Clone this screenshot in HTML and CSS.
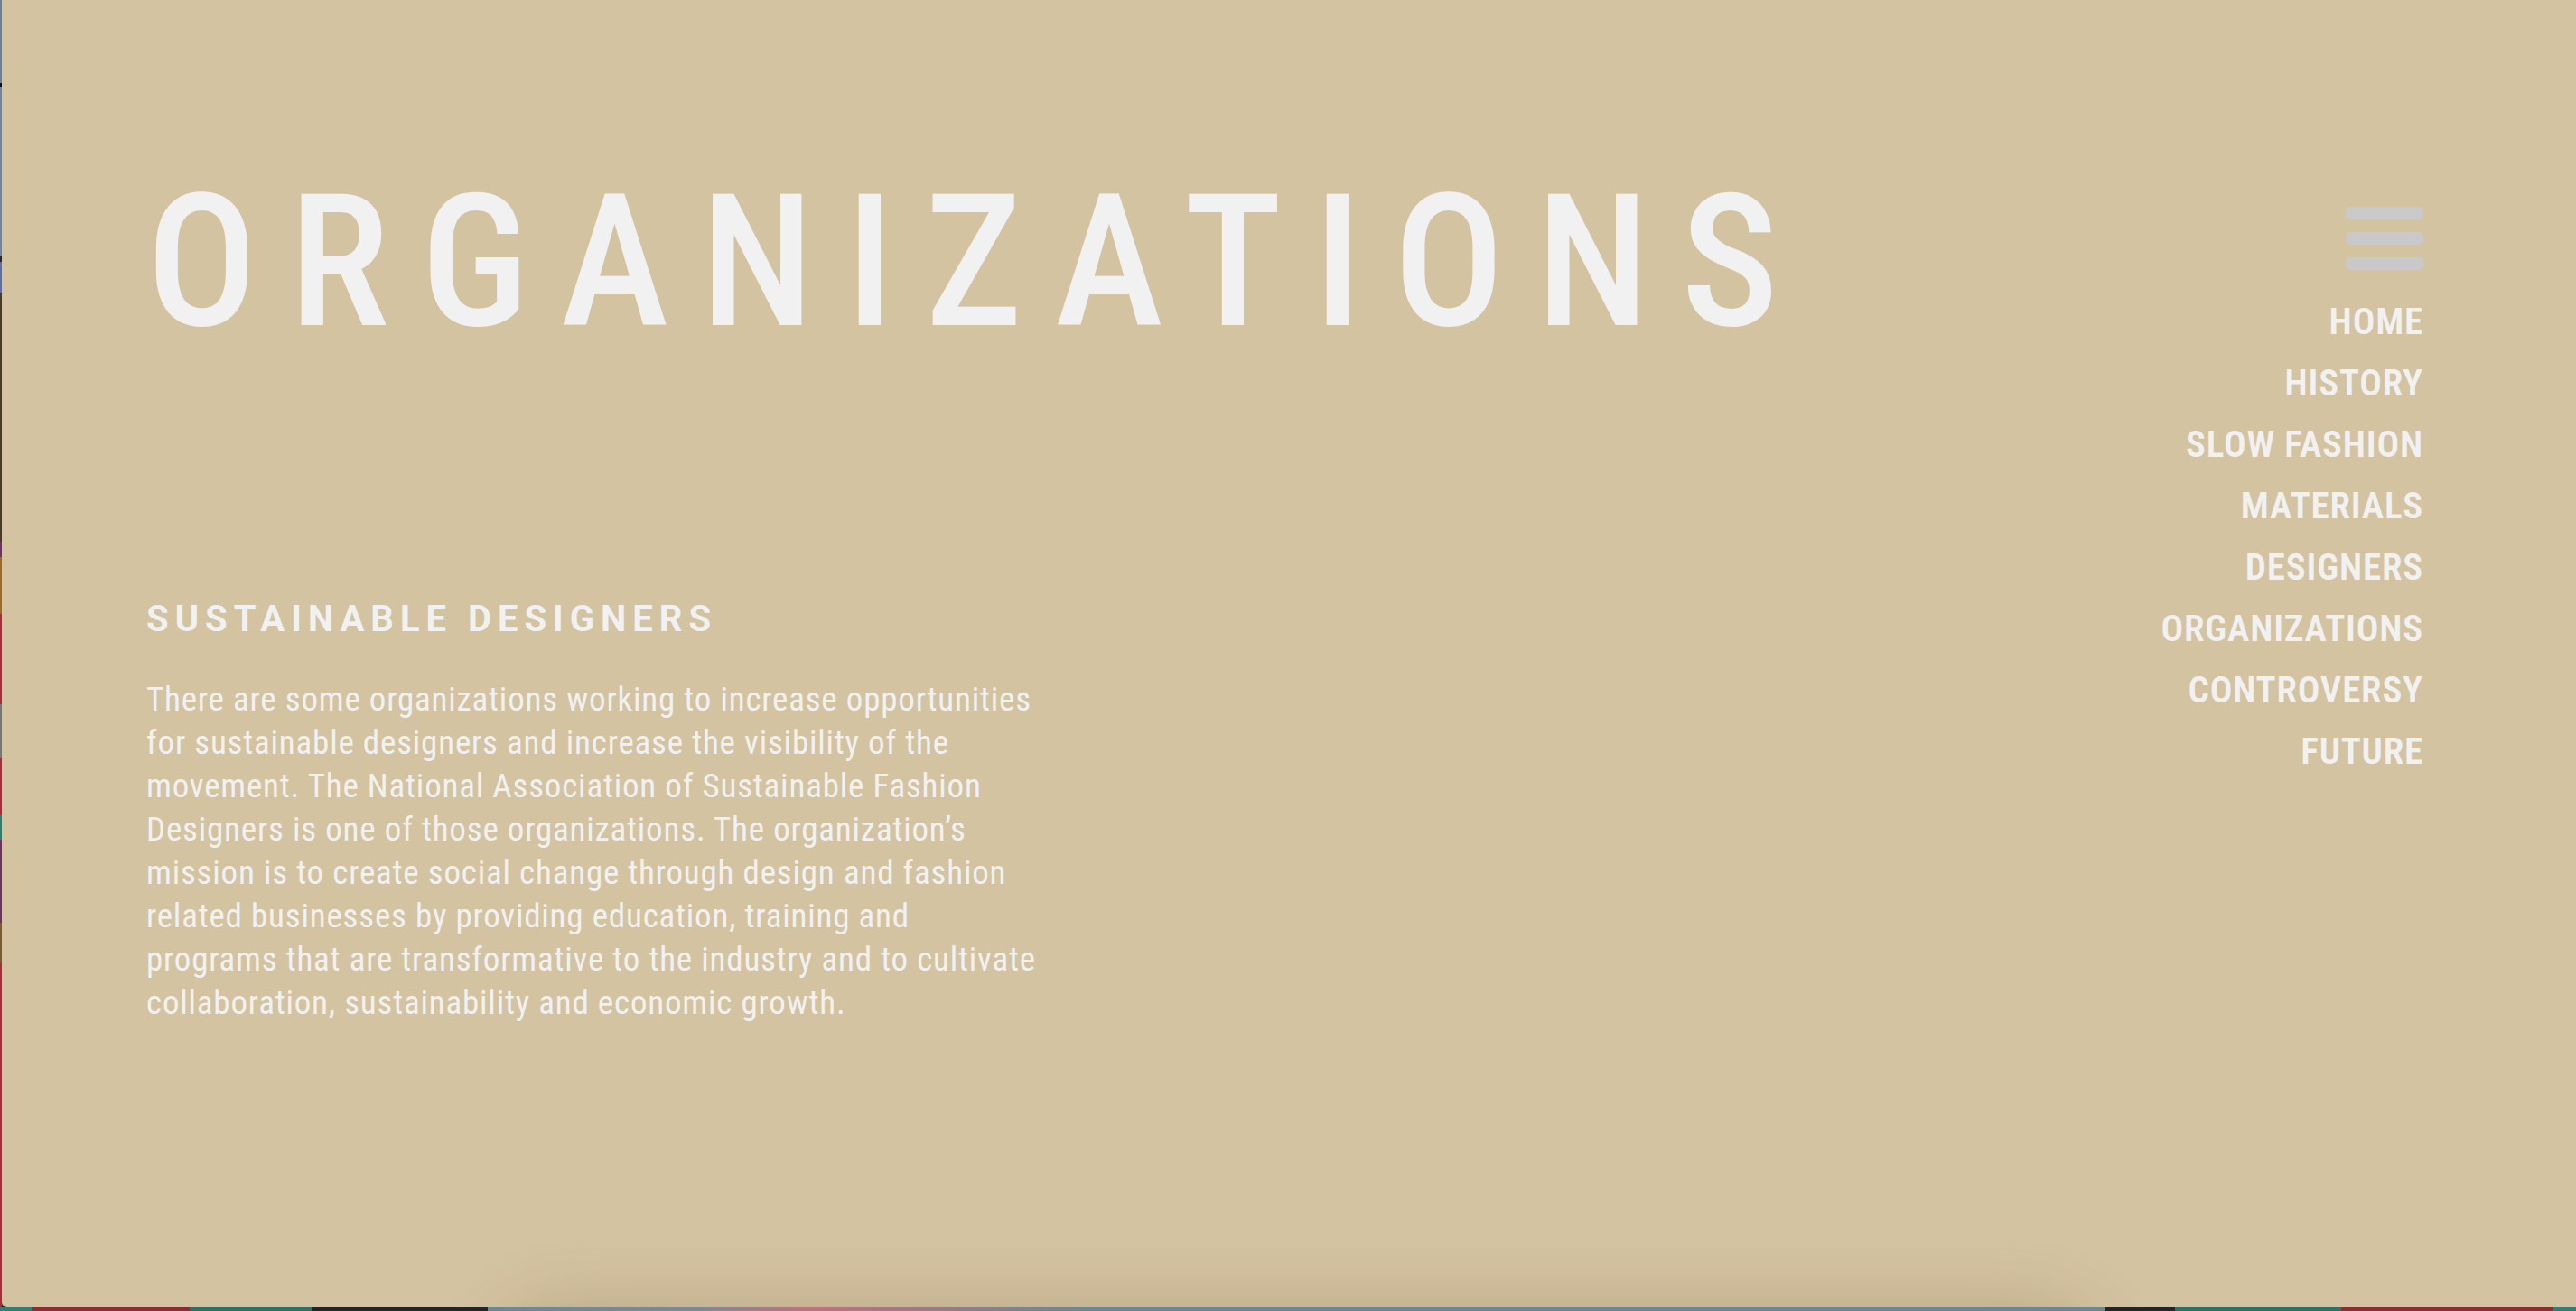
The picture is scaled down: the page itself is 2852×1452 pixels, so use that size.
FILE: index.html
```html
<!DOCTYPE html>
<html lang="en">
<head>
<meta charset="utf-8">
<title>Organizations</title>
<link rel="stylesheet" href="styles.css">
</head>
<body>
<div class="desktop">
  <div class="window">
    <div class="layout">
      <main class="content">
        <h1 class="title">ORGANIZATIONS</h1>
        <section class="block">
          <h2 class="block-heading">SUSTAINABLE DESIGNERS</h2>
          <p class="block-text">There are some organizations working to increase opportunities<br>for sustainable designers and increase the visibility of the<br>movement. The National Association of Sustainable Fashion<br>Designers is one of those organizations. The organization’s<br>mission is to create social change through design and fashion<br>related businesses by providing education, training and<br>programs that are transformative to the industry and to cultivate<br>collaboration, sustainability and economic growth.</p>
        </section>
      </main>
      <nav class="menu">
        <button class="burger" aria-label="Menu"><span></span><span></span><span></span></button>
        <ul class="menu-list">
          <li><a href="#">HOME</a></li>
          <li><a href="#">HISTORY</a></li>
          <li><a href="#">SLOW FASHION</a></li>
          <li><a href="#">MATERIALS</a></li>
          <li><a href="#">DESIGNERS</a></li>
          <li><a href="#">ORGANIZATIONS</a></li>
          <li><a href="#">CONTROVERSY</a></li>
          <li><a href="#">FUTURE</a></li>
        </ul>
      </nav>
    </div>
    <div class="peek"></div>
  </div>
</div>
</body>
</html>
```

FILE: styles.css
```css
* { box-sizing: border-box; }

html, body {
  margin: 0;
  padding: 0;
  height: 100%;
}

body {
  overflow: hidden;
  background: #2b2b2b;
}

.desktop {
  width: 2852px;
  height: 1452px;
  padding: 0 0 4px 2px;
  background:
    linear-gradient(to right,
      #2f7f78 0, #2f7f78 35px,
      #8e2b2e 35px, #8e2b2e 210px,
      #2f6f6a 210px, #2f6f6a 345px,
      #22252b 345px, #22252b 540px,
      #6a8796 540px, #7a8a9a 760px, #c0707f 900px,
      #6a8796 1200px, #6a8796 2330px,
      #22252b 2330px, #22252b 2408px,
      #2f6f6a 2408px, #2f6f6a 2592px,
      #8e2b2e 2592px, #8e2b2e 2826px,
      #2f7f78 2826px) bottom / 100% 4px no-repeat,
    linear-gradient(to bottom,
      #6f7f9a 0, #6f7f9a 92px,
      #111 92px, #111 96px,
      #7383a0 96px, #7383a0 283px,
      #2a2a2a 283px, #2a2a2a 290px,
      #5d6fa0 290px, #5d6fa0 325px,
      #4a3a2a 325px, #4a3a2a 600px,
      #6b3560 600px, #6b3560 617px,
      #9a6a2a 617px, #9a6a2a 680px,
      #a0303a 680px, #a0303a 780px,
      #777 780px, #777 840px,
      #a0303a 840px, #a0303a 903px,
      #2a8070 903px, #2a8070 930px,
      #6b3560 930px, #6b3560 1022px,
      #7a5a30 1022px, #7a5a30 1067px,
      #a0303a 1067px) left / 2px 100% no-repeat,
    #2b2b2b;
}

.window {
  position: relative;
  height: 1448px;
  overflow: hidden;
  background: #d4c3a1;
  border-bottom-left-radius: 6px;
  color: #f1f1f1;
}

.layout {
  display: flex;
  justify-content: space-between;
  align-items: flex-start;
  padding: 0 169px 0 160px;
}

.content {
  padding-top: 189px;
}

.title {
  margin: 0;
  font-family: Roboto, "Liberation Sans", sans-serif;
  font-weight: 500;
  font-stretch: 75%;
  font-size: 204px;
  line-height: 204px;
  letter-spacing: 35px;
  color: #f1f1f1;
  white-space: nowrap;
}

.block {
  margin-top: 269px;
}

.block-heading {
  margin: 0;
  font-family: Roboto, "Liberation Sans", sans-serif;
  font-weight: 700;
  font-size: 40px;
  line-height: 48px;
  letter-spacing: 7px;
  color: #f1f1f1;
}

.block-text {
  margin: 41px 0 0;
  font-family: Roboto, "Liberation Sans", sans-serif;
  font-weight: 400;
  font-stretch: 87.5%;
  font-size: 37px;
  line-height: 48px;
  letter-spacing: 0.8px;
  color: #f1f1f1;
  white-space: nowrap;
}

.menu {
  display: flex;
  flex-direction: column;
  align-items: flex-end;
  padding-top: 229px;
}

.burger {
  display: flex;
  flex-direction: column;
  gap: 14px;
  padding: 0;
  margin: 0;
  border: 0;
  background: none;
  cursor: pointer;
}

.burger span {
  display: block;
  width: 86px;
  height: 14px;
  border-radius: 5px;
  background: #c9c9c9;
}

.menu-list {
  list-style: none;
  margin: 23px 0 0;
  padding: 0;
  text-align: right;
}

.menu-list li {
  font-family: Roboto, "Liberation Sans", sans-serif;
  font-weight: 600;
  font-stretch: 84%;
  font-size: 41px;
  line-height: 68px;
  letter-spacing: 0.8px;
}

.menu-list a {
  color: #f1f1f1;
  text-decoration: none;
}

.peek {
  position: absolute;
  left: 560px;
  right: 540px;
  top: 1462px;
  height: 200px;
  border-radius: 60px;
  background: #d4c3a1;
  box-shadow: 0 0 80px 10px rgba(90, 70, 30, 0.24);
}
```
